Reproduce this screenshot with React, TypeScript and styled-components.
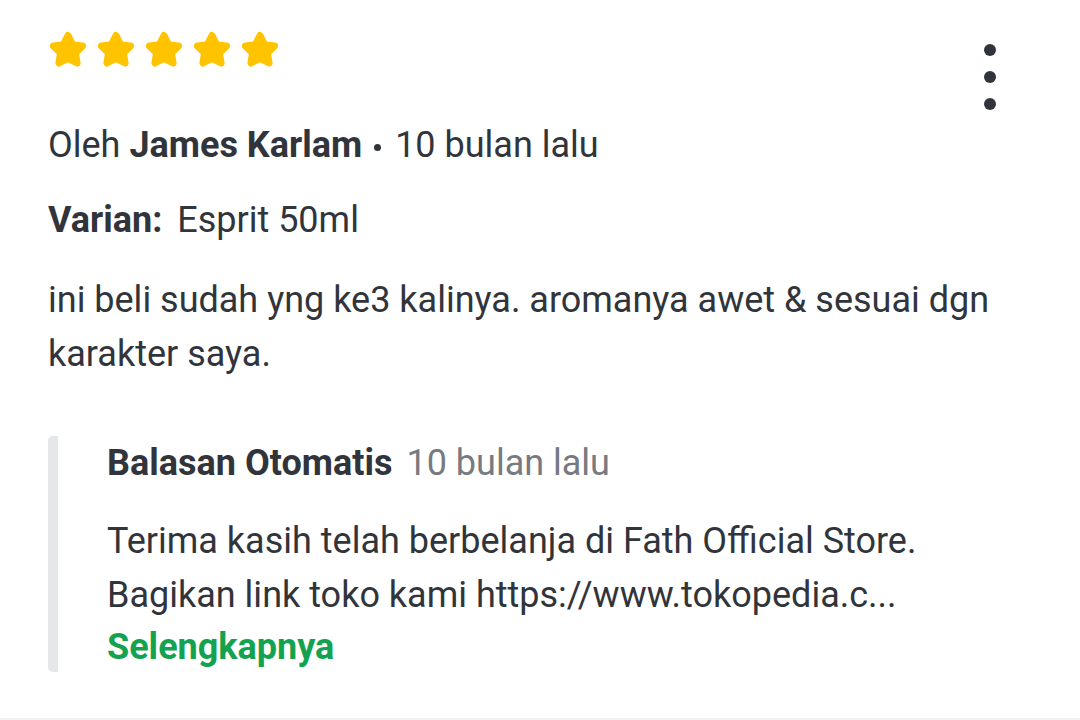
import { FC } from "react"
import styled, { createGlobalStyle } from "styled-components"

const GlobalStyle = createGlobalStyle`
  body {
    margin: 0;
    background: #ffffff;
    font-family: Roboto, "Noto Sans", sans-serif;
    color: #31353b;
  }
`

const Star: FC = () => (
  <svg width="40" height="38" viewBox="0 0 40 38">
    <path
      d="M20 5.5 L24.6 14.6 L34.6 16 L27.4 23 L29.1 33 L20 28.3 L10.9 33 L12.6 23 L5.4 16 L15.4 14.6 Z"
      fill="#ffc300"
      stroke="#ffc300"
      strokeWidth="7"
      strokeLinejoin="round"
    />
  </svg>
)

export default function App() {
  return (
    <>
      <GlobalStyle />
      <Card>
        <Header>
          <Stars>
            {[0, 1, 2, 3, 4].map((i) => (
              <Star key={i} />
            ))}
          </Stars>
          <MenuButton aria-label="more">
            <Dot />
            <Dot />
            <Dot />
          </MenuButton>
        </Header>
        <Meta>
          Oleh <strong>James Karlam</strong>
          <Bullet />
          10 bulan lalu
        </Meta>
        <Variant>
          <strong>Varian:</strong> Esprit 50ml
        </Variant>
        <Comment>
          ini beli sudah yng ke3 kalinya. aromanya awet &amp; sesuai dgn
          <br />
          karakter saya.
        </Comment>
        <Reply>
          <ReplyHead>
            <strong>Balasan Otomatis</strong>
            <Muted>10 bulan lalu</Muted>
          </ReplyHead>
          <ReplyText>
            Terima kasih telah berbelanja di Fath Official Store.
            <br />
            Bagikan link toko kami https://www.tokopedia.c...
          </ReplyText>
          <More>Selengkapnya</More>
        </Reply>
      </Card>
    </>
  )
}

const Card = styled.div`
  padding: 30px 48px 0 48px;
  border-bottom: 2px solid #f0f1f3;
  height: 720px;
  box-sizing: border-box;
  font-size: 36px;
  line-height: 54px;

  strong {
    font-weight: 700;
  }
`

const Header = styled.div`
  display: flex;
  justify-content: space-between;
  align-items: flex-start;
  height: 38px;
`

const Stars = styled.div`
  display: flex;
  gap: 8px;
`

const MenuButton = styled.div`
  display: flex;
  flex-direction: column;
  align-items: center;
  gap: 15px;
  margin-top: 14px;
  margin-right: 36px;
`

const Dot = styled.span`
  width: 12px;
  height: 12px;
  border-radius: 50%;
  background: #31353b;
`

const Meta = styled.div`
  margin-top: 50px;
`

const Bullet = styled.span`
  display: inline-block;
  width: 7px;
  height: 7px;
  border-radius: 50%;
  background: #31353b;
  vertical-align: middle;
  margin: 0 14px 0 12px;
`

const Variant = styled.div`
  margin-top: 21px;

  strong {
    margin-right: 6px;
  }
`

const Comment = styled.p`
  margin: 26px 0 0;
`

const Reply = styled.div`
  margin-top: 55px;
  border-left: 10px solid #e5e7e9;
  border-radius: 5px;
  padding-left: 49px;
`

const ReplyHead = styled.div`
  display: flex;
  gap: 14px;
`

const Muted = styled.span`
  color: #777a80;
`

const ReplyText = styled.p`
  margin: 24px 0 0;
`

const More = styled.div`
  color: #13a350;
  font-weight: 700;
  line-height: 50px;
`
